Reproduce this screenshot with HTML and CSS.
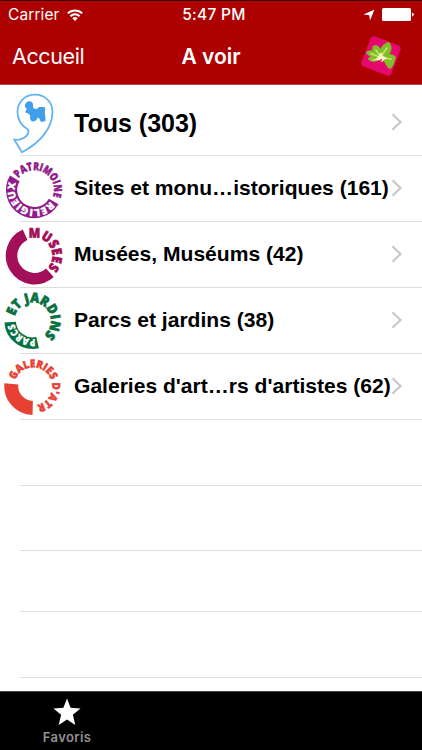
FILE: index.html
```html
<!DOCTYPE html>
<html lang="fr">
<head>
    <meta charset="UTF-8">
    <meta name="viewport" content="width=device-width, initial-scale=1.0">
    <title>A voir</title>
    <link rel="stylesheet" href="styles.css">
</head>
<body>
    <header>
        <div class="status">
            <div class="carrier">
                <span>Carrier</span>
                <svg width="16" height="12" viewBox="0 0 16 12" fill="none" stroke="#fff" stroke-width="2">
                    <path d="M.8 4.4A10.4 10.4 0 0 1 15.2 4.4M3.4 7.2A6.6 6.6 0 0 1 12.6 7.2"/>
                    <path d="M8 12L5.3 9.2A4 4 0 0 1 10.7 9.2Z" fill="#fff" stroke="none"/>
                </svg>
            </div>
            <span class="time">5:47 PM</span>
            <div class="battery">
                <svg width="12" height="12" viewBox="0 0 12 12"><path d="M11.5 .5L7 11.5L6.2 6.2L.5 5.6Z" fill="#fff"/></svg>
                <svg width="32" height="13" viewBox="0 0 32 13" fill="#fff">
                    <rect width="29" height="13" rx="1.5"/>
                    <path d="M30 4.5Q31.8 5 31.8 6.5T30 8.5Z"/>
                </svg>
            </div>
        </div>
        <nav>
            <a class="back">Accueil</a>
            <h1>A voir</h1>
            <svg class="logo" width="44" height="44" viewBox="0 0 44 44">
                <rect x="6" y="6" width="32" height="32" rx="3.5" fill="#e5086f" transform="rotate(21 22 22)"/>
                <g fill="#7fc02a">
                    <path d="M20 23C14 20 12 15 14 12C17 10 22 12 22 18Z"/>
                    <path d="M20 22C20 15 24 9 30 8C34 12 34 21 24 23Z"/>
                    <path d="M20 23C13 24 8 22 7 18C12 15 18 16 22 21Z"/>
                    <path d="M22 24C16 21 9 22 9 25C12 29 18 28 22 25Z"/>
                    <path d="M23 21C29 19 36 20 37 24C35 26 36 32 31 35C27 34 28 29 22 25Z"/>
                </g>
                <g fill="none" stroke="#c9e36b" stroke-width="1.6" stroke-linecap="round">
                    <path d="M21 22L17 16M23 21L28 14M20 23L12 19.5M20 25L14 26M24 24L32 25"/>
                </g>
                <path d="M22 18L24 22L28 24L25 26L23 28L20 26L16 26L19 23Z" fill="#fff3c4"/>
                <circle cx="22" cy="26" r="1" fill="#d8294c"/>
            </svg>
        </nav>
    </header>

    <main>
        <ul>
            <li class="row first">
                <svg class="picto" width="72" height="70" viewBox="0 0 72 70">
                    <path d="M28.5 45C22 41 17.5 35 17.5 27C17.5 17 25 9.7 35 9.7S52.5 17 52.5 27C52.5 43 40 58 22 67.2L14.3 54.7C22 55.5 29 51 28.5 45Z" fill="#fff" stroke="#62b3f0" stroke-width="1.8"/>
                    <path d="M25.5 19C26 16 31 15 32.5 18C34 20.5 32 23 34.5 23.5Q37 25 39 22H44.5Q46 24 44.8 27Q45 31 45.7 35.5Q43 37.5 40.5 36.5Q40 33 37.5 32.5Q36.5 37 31.5 36.3Q29.5 34 30 30Q28 28 25 27.2L26.8 24Q23.5 21 25.5 19Z" fill="#3f9fea"/>
                </svg>
                <span class="label">Tous (303)</span>
                <svg class="chevron" width="12" height="18" viewBox="0 0 12 18"><path d="M1.5 1.2L9.5 9L1.5 16.8"/></svg>
            </li>
            <li class="row">
                <svg class="picto" width="72" height="65" viewBox="0 3 72 65">
                    <g transform="translate(34.4 36.7)">
                        <path d="M-19.6 -11.3A22.6 22.6 0 0 0 19.3 11.8" fill="none" stroke="#901b8b" stroke-width="11.2"/>
                        <path id="c2" d="M-19.6 0A19.6 19.6 0 1 1 19.6 0A19.6 19.6 0 1 1 -19.6 0" fill="none"/>
                        <text class="ring purple" transform="rotate(36)"><textPath href="#c2" textLength="56" lengthAdjust="spacingAndGlyphs">PATRIMOINE</textPath></text>
                        <text class="ring inner" transform="rotate(216)"><textPath href="#c2" textLength="56" lengthAdjust="spacingAndGlyphs">RELIGIEUX</textPath></text>
                    </g>
                </svg>
                <span class="label">Sites et monu…istoriques (161)</span>
                <svg class="chevron" width="12" height="18" viewBox="0 0 12 18"><path d="M1.5 1.2L9.5 9L1.5 16.8"/></svg>
            </li>
            <li class="row">
                <svg class="picto" width="72" height="65" viewBox="0 2 72 65">
                    <g transform="translate(34.5 35.7)">
                        <path d="M-9.4 -21A23 23 0 1 0 15.4 17.1" fill="none" stroke="#a30f58" stroke-width="11.5"/>
                        <path id="c3" d="M-18 0A18 18 0 1 1 18 0A18 18 0 1 1 -18 0" fill="none"/>
                        <text class="ring big magenta" transform="rotate(72)"><textPath href="#c3" textLength="47" lengthAdjust="spacingAndGlyphs">MUSEES</textPath></text>
                    </g>
                </svg>
                <span class="label">Musées, Muséums (42)</span>
                <svg class="chevron" width="12" height="18" viewBox="0 0 12 18"><path d="M1.5 1.2L9.5 9L1.5 16.8"/></svg>
            </li>
            <li class="row">
                <svg class="picto" width="72" height="65" viewBox="0 3 72 65">
                    <g transform="translate(32.5 35.7)">
                        <path d="M-22.3 1.4A22.4 22.4 0 0 0 5.1 21.9" fill="none" stroke="#08713f" stroke-width="11.5"/>
                        <path id="c4" d="M-18.3 0A18.3 18.3 0 1 1 18.3 0A18.3 18.3 0 1 1 -18.3 0" fill="none"/>
                        <text class="ring big green" transform="rotate(14)"><textPath href="#c4" textLength="69" lengthAdjust="spacingAndGlyphs">ET JARDINS</textPath></text>
                        <text class="ring inner" transform="rotate(262)"><textPath href="#c4" textLength="28" lengthAdjust="spacingAndGlyphs">PARCS</textPath></text>
                    </g>
                </svg>
                <span class="label">Parcs et jardins (38)</span>
                <svg class="chevron" width="12" height="18" viewBox="0 0 12 18"><path d="M1.5 1.2L9.5 9L1.5 16.8"/></svg>
            </li>
            <li class="row">
                <svg class="picto" width="72" height="65" viewBox="0 3 72 65">
                    <g transform="translate(33.3 35.3)">
                        <path d="M-22 -2.5A22 22 0 0 0 -.6 21.6" fill="none" stroke="#e64132" stroke-width="14"/>
                        <path id="c5" d="M-19 0A19 19 0 1 1 19 0A19 19 0 1 1 -19 0" fill="none"/>
                        <text class="ring red" transform="rotate(19)"><textPath href="#c5" textLength="79" lengthAdjust="spacingAndGlyphs">GALERIES D'ATR</textPath></text>
                    </g>
                </svg>
                <span class="label">Galeries d'art…rs d'artistes (62)</span>
                <svg class="chevron" width="12" height="18" viewBox="0 0 12 18"><path d="M1.5 1.2L9.5 9L1.5 16.8"/></svg>
            </li>
            <li class="row empty"></li>
            <li class="row empty"></li>
            <li class="row empty short"></li>
            <li class="row empty"></li>
        </ul>
    </main>

    <footer>
        <a class="tab">
            <svg width="28" height="28" viewBox="0 0 28 28"><path d="M14 .5L17.6 9.8L27.5 10.4L19.9 16.8L22.3 27L14 21.6L5.7 27L8.1 16.8L.5 10.4L10.4 9.8Z" fill="#fff"/></svg>
            <span>Favoris</span>
        </a>
    </footer>
</body>
</html>
```

FILE: styles.css
```css
* {
    box-sizing: border-box;
}

body {
    font-family: "Liberation Sans", Arial, sans-serif;
    margin: 0;
    height: 750px;
    display: flex;
    flex-direction: column;
    background-color: #fff;
    overflow: hidden;
}

svg {
    display: block;
    flex: none;
}

header {
    height: 85px;
    background-color: #ad0000;
    color: #fff;
    border-top: 1px solid #3a0000;
    border-bottom: 1px solid #c04040;
    font-family: Inter, sans-serif;
}

.status {
    height: 27px;
    padding: 0 8px;
    display: grid;
    grid-template-columns: 1fr auto 1fr;
    align-items: center;
    font-size: 15.5px;
}

.carrier {
    display: flex;
    align-items: center;
    gap: 7px;
    letter-spacing: 0.1px;
}

.time {
    padding-left: 6px;
    font-weight: 500;
    font-size: 15.5px;
    letter-spacing: 0.3px;
}

.battery {
    display: flex;
    justify-content: flex-end;
    align-items: center;
    gap: 7px;
}

nav {
    height: 56px;
    padding: 0 19px 0 12px;
    display: grid;
    grid-template-columns: 1fr auto 1fr;
    align-items: center;
}

.back {
    font-size: 21.5px;
    letter-spacing: -0.4px;
}

h1 {
    margin: 0;
    padding-left: 7px;
    font-size: 21px;
    font-weight: 600;
}

.logo {
    justify-self: end;
}

main {
    flex: 1;
}

ul {
    list-style: none;
    margin: 0;
    padding: 0;
}

.row {
    height: 66px;
    display: flex;
    align-items: center;
    padding-right: 19px;
    padding-bottom: 1px;
    background: linear-gradient(#dedede, #dedede) 20px 100% / 100% 1px no-repeat;
    color: #000;
    font-size: 21.07px;
    font-weight: bold;
}

.first {
    height: 71px;
    font-size: 25px;
}

.short {
    height: 61px;
}

/* the seventh row sits a pixel tighter */
.empty:nth-child(7) {
    height: 65px;
}

.label {
    flex: 1;
    min-width: 0;
    padding-left: 2px;
    padding-bottom: 1px;
    white-space: nowrap;
}

.first .label {
    padding-top: 7px;
}

.chevron {
    fill: none;
    stroke: #c7c7cc;
    stroke-width: 2.2;
    margin-bottom: 1px;
}

.first .chevron {
    margin-top: 5px;
}

/* text running round the pictograms */
.ring {
    font-family: "Open Sans", sans-serif;
    font-size: 11px;
    font-weight: 800;
    stroke-width: 0.5;
}

.big {
    font-size: 13.5px;
    stroke-width: 0.7;
}

.inner {
    font-size: 10px;
    fill: #fff;
    stroke: #fff;
    stroke-width: 0.2;
}

.purple {
    fill: #901b8b;
    stroke: #901b8b;
}

.magenta {
    fill: #a30f58;
    stroke: #a30f58;
}

.green {
    fill: #08713f;
    stroke: #08713f;
}

.red {
    fill: #e64132;
    stroke: #e64132;
}

footer {
    height: 59px;
    background-color: #000;
    border-top: 1px solid #444;
}

.tab {
    width: 134px;
    padding-top: 6px;
    display: flex;
    flex-direction: column;
    align-items: center;
    gap: 3px;
    color: #929292;
    font-family: Inter, sans-serif;
    font-size: 13px;
    font-weight: 600;
    letter-spacing: 0.4px;
}
```
